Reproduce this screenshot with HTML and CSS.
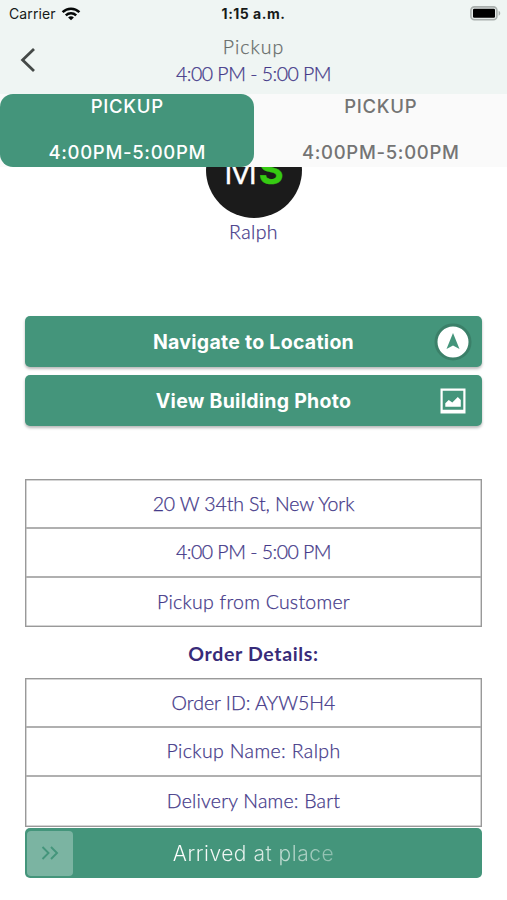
FILE: index.html
```html
<!DOCTYPE html>
<html lang="en">
<head>
<meta charset="utf-8">
<title>Pickup</title>
<link rel="stylesheet" href="styles.css">
</head>
<body>
<div class="screen">
  <header class="header">
    <div class="status">
      <div class="carrier"><span>Carrier</span>
        <svg width="20" height="14" viewBox="0 0 20 14" fill="none" stroke="#050807" stroke-width="2.5"><path d="M1.6 5.2C6.3.6 13.7.6 18.4 5.2"/><path d="M4.8 8.3c3-2.8 7.4-2.8 10.4 0"/><path d="M7.1 10.4c1.8-1.5 4-1.5 5.8 0L10 13.3z" fill="#050807" stroke="none"/></svg>
      </div>
      <div class="clock">1:15 a.m.</div>
      <svg class="battery" width="31" height="15" viewBox="0 0 31 15"><rect x=".9" y=".9" width="26" height="12.8" rx="3.5" fill="#e5eae8" stroke="#a9afad" stroke-width="1.6"/><rect x="3" y="2.8" width="22" height="9" rx="1.2" fill="#000"/><path d="M28.6 4.8c2.2.8 2.2 4.2 0 5z" fill="#a9afad"/></svg>
    </div>
    <div class="nav">
      <svg class="back" width="16" height="26" viewBox="0 0 16 26" fill="none" stroke="#444947" stroke-width="2.8"><path d="M14 2 2.6 13 14 24"/></svg>
      <div class="titles">
        <div class="title">Pickup</div>
        <div class="window">4:00 PM - 5:00 PM</div>
      </div>
    </div>
  </header>
  <nav class="tabs">
    <div class="tab active"><span>PICKUP</span><span>4:00PM-5:00PM</span></div>
    <div class="tab"><span>PICKUP</span><span>4:00PM-5:00PM</span></div>
  </nav>
  <main class="content">
    <div class="avatar"><span class="m">M</span><span class="s">S</span></div>
    <div class="name">Ralph</div>
    <div class="actions">
      <div class="button"><span>Navigate to Location</span>
        <svg class="icon" width="38" height="38" viewBox="0 0 38 38"><circle cx="19" cy="19" r="17" fill="#fff" stroke="#3b8069" stroke-width="3"/><path d="M19 10 25.5 26 19 22.6 12.5 26z" fill="#44957b"/></svg>
      </div>
      <div class="button"><span>View Building Photo</span>
        <svg class="icon" width="38" height="38" viewBox="0 0 38 38"><path fill="#fff" fill-rule="evenodd" d="M6.5 6.5h25v25h-25zM8.7 8.7v19h20.6v-19z"/><path fill="#fff" d="M11.3 24.8v-3.6l3.4-3.2 3.6 2.4 5.5-5.5 3 3.2v6.7z"/></svg>
      </div>
    </div>
    <div class="table address">
      <div class="row street">20 W 34th St, New York</div>
      <div class="row window">4:00 PM - 5:00 PM</div>
      <div class="row kind">Pickup from Customer</div>
    </div>
    <h2 class="heading">Order Details:</h2>
    <div class="table">
      <div class="row">Order ID: AYW5H4</div>
      <div class="row sender">Pickup Name: Ralph</div>
      <div class="row receiver">Delivery Name: Bart</div>
    </div>
    <div class="slider">
      <div class="thumb"><svg width="18" height="14" viewBox="0 0 18 14" fill="none" stroke="#44957b" stroke-width="1.9"><path d="M1.5 1 7.5 7l-6 6M10 1l6 6-6 6"/></svg></div>
      <span class="label">Arrived at place</span>
    </div>
  </main>
</div>
</body>
</html>
```
FILE: styles.css
```css
* { box-sizing: border-box; }
body { margin: 0; background: #fff; }
svg { display: block; flex: none; }
.screen { width: 507px; height: 900px; overflow: hidden; display: flex; flex-direction: column; font-family: Lato, sans-serif; font-weight: 300; font-size: 19.5px; color: #443989; background: #fff; white-space: nowrap; }
.title, .window, .name, .row { -webkit-text-stroke: .25px currentColor; }
.header { height: 94px; flex: none; background: #eff5f3; }
.status { height: 27px; display: grid; grid-template-columns: 1fr auto 1fr; align-items: center; padding: 0 6px 0 9px; font-family: Inter, sans-serif; color: #161a19; }
.carrier { display: flex; align-items: center; gap: 5px; font-size: 14px; font-weight: 400; letter-spacing: .1px; }
.clock { font-size: 14px; font-weight: 700; letter-spacing: .5px; margin-right: 3px; }
.battery { justify-self: end; }
.nav { height: 66px; display: grid; grid-template-columns: 50px 1fr 50px; align-items: center; }
.back { margin: 0 0 1px 20px; }
.titles { text-align: center; line-height: 27px; padding-bottom: 1px; }
.title { color: #666b69; letter-spacing: 1px; }
.window { letter-spacing: -.5px; }
.tabs { height: 73px; flex: none; display: flex; background: #fafafa; z-index: 1; font-family: Inter, sans-serif; font-size: 18.5px; font-weight: 500; letter-spacing: .7px; color: #747474; }
.tab { flex: 1; display: flex; flex-direction: column; align-items: center; line-height: 46.5px; height: 73px; justify-content: center; border-radius: 13px; padding: 0 0 3px 1px; }
.active { background: #44957b; color: #fff; }
.content { flex: 1; padding: 0 25px; display: flex; flex-direction: column; margin-top: -45.5px; }
.avatar { width: 96px; height: 96px; border-radius: 50%; background: #1b1b1b; align-self: center; display: flex; justify-content: center; align-items: center; font: 300 38px/1 Inter, sans-serif; color: #fff; flex: none; gap: 1px; -webkit-text-stroke: .4px currentColor; }
.s { color: #36cb12; font-weight: 700; }
.name { text-align: center; line-height: 27px; height: 28px; letter-spacing: .4px; }
.actions { margin-top: 70.5px; display: flex; flex-direction: column; gap: 8px; }
.button { height: 51px; background: #44957b; border-radius: 5px; box-shadow: 0 2px 3px rgba(0,0,0,.28); color: #fff; font: 700 19.5px Inter, sans-serif; letter-spacing: .27px; display: grid; grid-template-columns: 50px 1fr 50px; align-items: center; text-align: center; padding: 0 4px; }
.button span { grid-column: 2; }
.button .icon { grid-column: 3; justify-self: end; margin-right: 6px; }
.table { border: 1px solid #999; box-shadow: inset 0 0 0 .5px #aaa; height: 149px; display: grid; grid-template-rows: 47px 49px 1fr; flex: none; }
.address { margin-top: 53px; height: 148px; }
.row { display: flex; align-items: center; justify-content: center; padding-bottom: 1px; }
.row + .row { border-top: 2px solid #b0b0b0; padding-bottom: 2px; }
.street { letter-spacing: -.1px; }
.kind { letter-spacing: .25px; }
.sender { letter-spacing: .38px; }
.receiver { letter-spacing: .2px; }
.heading { margin: 0; height: 51px; line-height: 53px; text-align: center; font-size: 19.5px; font-weight: 700; letter-spacing: .65px; color: #382b79; }
.slider { margin-top: 1px; height: 50px; background: #44957b; border-radius: 5px; display: grid; grid-template-columns: 46px 1fr 46px; align-items: center; padding: 0 2px; font: 300 21px Inter, sans-serif; letter-spacing: .5px; }
.thumb { width: 46px; height: 45px; border-radius: 4px; background: #7bb4a2; display: flex; align-items: center; justify-content: center; }
.label { justify-self: center; background: linear-gradient(90deg, #fff 0%, #e7f2ee 45%, #8abdac 100%); background-clip: text; -webkit-background-clip: text; color: transparent; }
```
